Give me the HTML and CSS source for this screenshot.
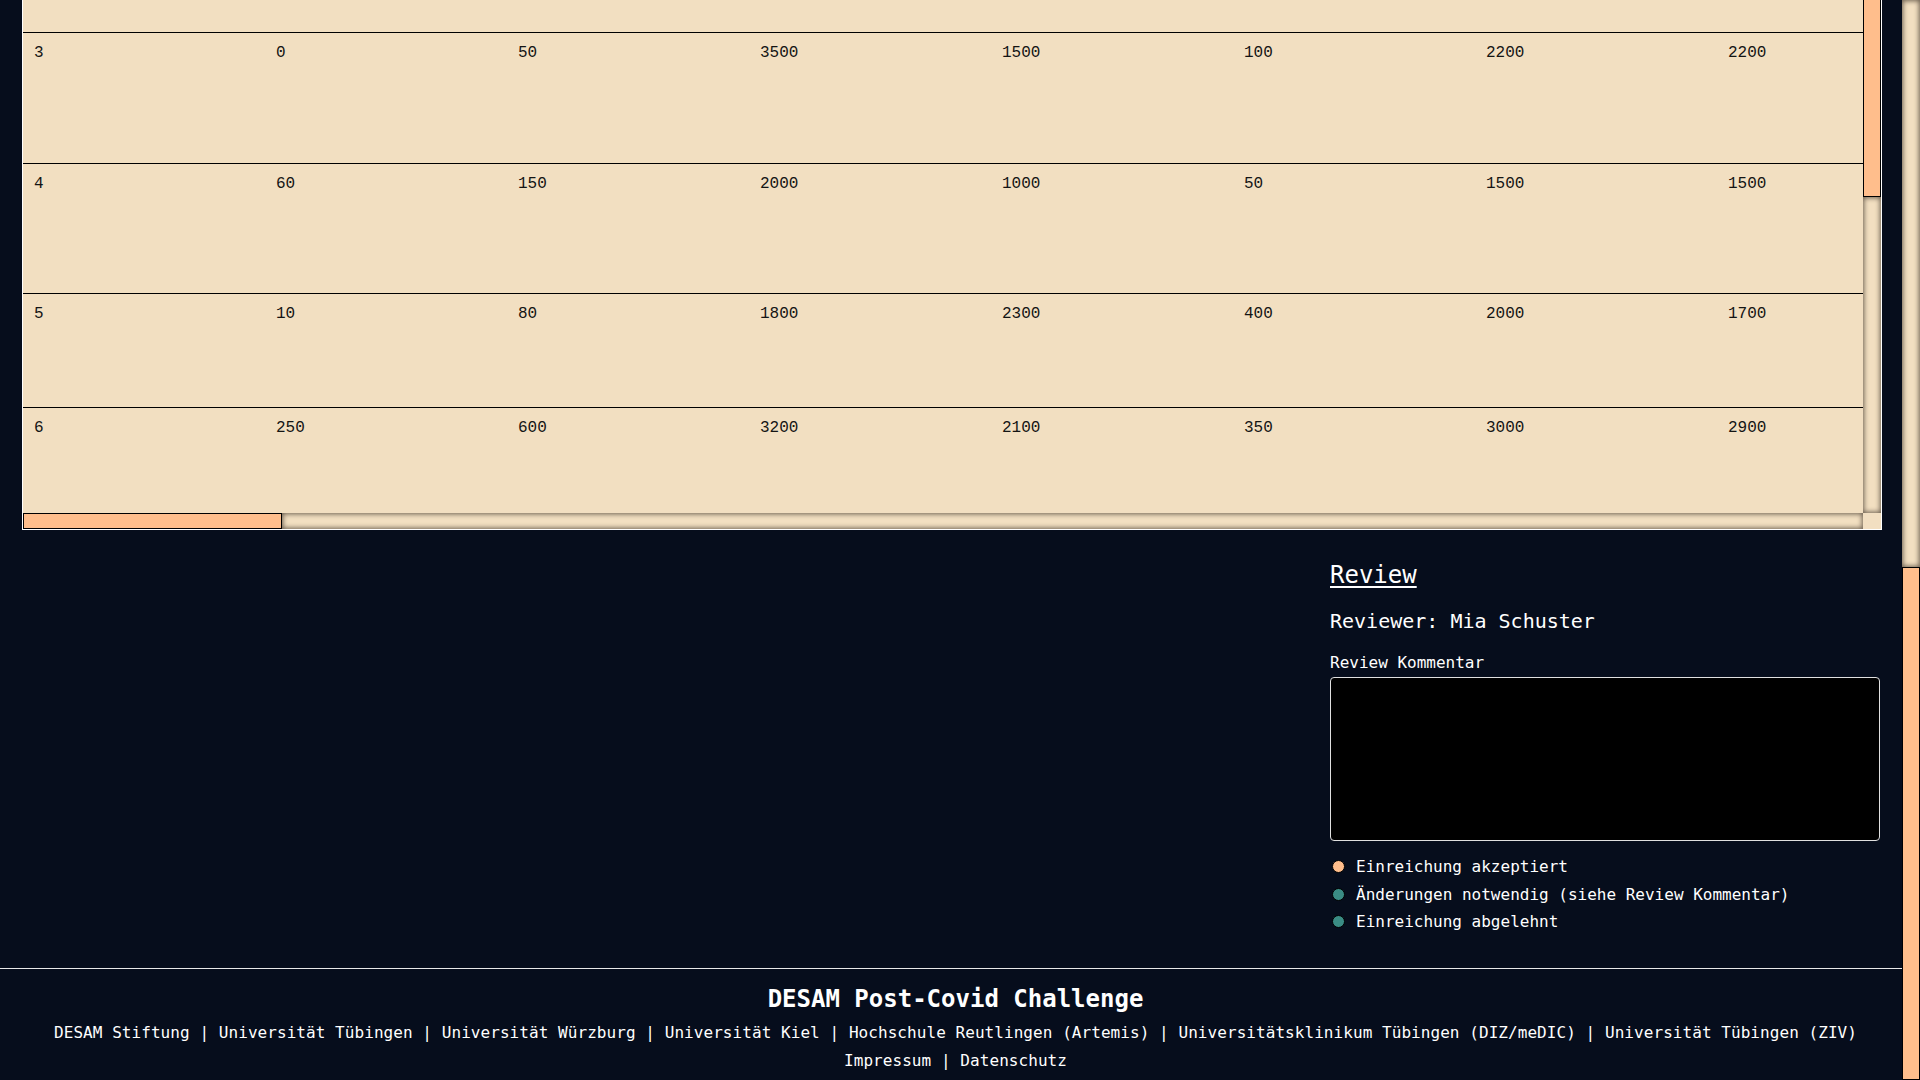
FILE: index.html
```html
<!DOCTYPE html>
<html lang="de">
<head>
<meta charset="utf-8">
<title>Einreichung – DESAM Post-Covid Challenge</title>
<link rel="stylesheet" href="styles.css">
</head>
<body>
<div class="page">
  <main class="main">
    <div class="table-panel">
      <div class="table-view">
        <table class="data-table">
          <tbody>
            <tr class="row-131"><td>3</td><td>0</td><td>50</td><td>3500</td><td>1500</td><td>100</td><td>2200</td><td>2200</td></tr>
            <tr class="row-130"><td>4</td><td>60</td><td>150</td><td>2000</td><td>1000</td><td>50</td><td>1500</td><td>1500</td></tr>
            <tr class="row-114"><td>5</td><td>10</td><td>80</td><td>1800</td><td>2300</td><td>400</td><td>2000</td><td>1700</td></tr>
            <tr class="row-120"><td>6</td><td>250</td><td>600</td><td>3200</td><td>2100</td><td>350</td><td>3000</td><td>2900</td></tr>
          </tbody>
        </table>
      </div>
      <div class="vbar">
        <div class="vbar-thumb"></div>
        <div class="bar-track"></div>
      </div>
      <div class="hbar">
        <div class="hbar-thumb"></div>
        <div class="bar-track"></div>
      </div>
      <div class="bar-corner"></div>
    </div>

    <div class="review-row">
      <section class="review">
        <h2 class="review-title">Review</h2>
        <p class="reviewer">Reviewer: Mia Schuster</p>
        <label class="comment-label" for="comment">Review Kommentar</label>
        <textarea id="comment" class="comment"></textarea>
        <div class="options">
          <label class="option"><input class="option-radio" type="radio" name="status" checked>Einreichung akzeptiert</label>
          <label class="option"><input class="option-radio" type="radio" name="status">Änderungen notwendig (siehe Review Kommentar)</label>
          <label class="option"><input class="option-radio" type="radio" name="status">Einreichung abgelehnt</label>
        </div>
      </section>
    </div>
  </main>

  <footer class="site-footer">
    <p class="footer-title">DESAM Post-Covid Challenge</p>
    <p class="footer-line"><a href="#">DESAM Stiftung</a> | <a href="#">Universität Tübingen</a> | <a href="#">Universität Würzburg</a> | <a href="#">Universität Kiel</a> | <a href="#">Hochschule Reutlingen (Artemis)</a> | <a href="#">Universitätsklinikum Tübingen (DIZ/meDIC)</a> | <a href="#">Universität Tübingen (ZIV)</a></p>
    <p class="footer-line"><a href="#">Impressum</a> | <a href="#">Datenschutz</a></p>
  </footer>
</div>

<div class="page-scrollbar">
  <div class="bar-track"></div>
  <div class="page-thumb"></div>
</div>
</body>
</html>
```

FILE: styles.css
```css
html,
body {
  height: 100%;
}

body {
  margin: 0;
  display: flex;
  overflow: hidden;
  background: #060d1c;
  color: #ffffff;
  font-family: "DejaVu Sans Mono", monospace;
  font-size: 16px;
}

.page {
  flex: 1;
  min-width: 0;
  display: flex;
  flex-direction: column;
}

/* fake scrollbars (drawn, as the capture hides native ones) */
.bar-track {
  flex: 1;
  background: #f2dfc1;
  box-shadow: inset 0 0 5px 1px #6a5e4e;
}

.page-scrollbar {
  width: 18px;
  flex: none;
  display: flex;
  flex-direction: column;
}

.page-thumb {
  height: 513px;
  box-sizing: border-box;
  background: #ffbe8c;
  border: 1px solid #000000;
}

/* main content */
.main {
  padding: 0 20px 0 22px;
}

.table-panel {
  display: grid;
  grid-template-columns: 1840px 18px;
  grid-template-rows: 513px 16px;
  border: 1px solid #ffffff;
  border-top: 0;
  background: #f2dfc1;
}

.table-view {
  overflow: hidden;
  padding-top: 32px;
  box-sizing: border-box;
}

.vbar {
  display: flex;
  flex-direction: column;
}

.vbar-thumb {
  height: 197px;
  box-sizing: border-box;
  background: #ffbe8c;
  border: 1px solid #000000;
  border-top: 0;
}

.hbar {
  display: flex;
}

.hbar-thumb {
  width: 259px;
  box-sizing: border-box;
  background: #ffbe8c;
  border: 1px solid #000000;
}

.bar-corner {
  background: #f2dfc1;
}

.data-table {
  border-collapse: separate;
  border-spacing: 0;
  border-top: 1px solid #000000;
  font-family: "Liberation Mono", monospace;
  font-size: 16px;
  color: #141414;
}

.data-table td {
  width: 242px;
  min-width: 242px;
  box-sizing: border-box;
  padding: 11px;
  text-align: left;
  vertical-align: top;
  border-bottom: 1px solid #000000;
  line-height: normal;
}

.row-114 { height: 114px; }
.row-120 { height: 120px; }
.row-130 { height: 130px; }
.row-131 { height: 131px; }

/* review */
.review-row {
  display: flex;
  justify-content: flex-end;
}

.review {
  width: 552px;
  padding-bottom: 37px;
}

.review-title {
  margin: 31px 0 0;
  font-size: 24px;
  line-height: 28px;
  font-weight: normal;
  text-decoration: underline;
  text-decoration-thickness: 2px;
  text-underline-offset: 3px;
}

.reviewer {
  margin: 20px 0 0;
  font-size: 20px;
  line-height: 24px;
}

.comment-label {
  display: block;
  margin-top: 20px;
  font-size: 16px;
  line-height: 19px;
}

.comment {
  display: block;
  margin: 5px 0 0;
  width: 550px;
  height: 164px;
  box-sizing: border-box;
  background: #000000;
  color: #ffffff;
  border: 1px solid #e0e0e0;
  border-radius: 4px;
  resize: none;
  font-family: "DejaVu Sans Mono", monospace;
  font-size: 16px;
}

.options {
  display: flex;
  flex-direction: column;
  gap: 8.5px;
  margin-top: 16px;
}

.option {
  display: flex;
  align-items: center;
  height: 19px;
  line-height: 19px;
  font-size: 16px;
}

.option-radio {
  appearance: none;
  -webkit-appearance: none;
  width: 13px;
  height: 13px;
  margin: 0 11px 0 2px;
  border: 1.5px solid #000000;
  border-radius: 50%;
  background: #3a8c84;
  box-sizing: border-box;
  flex: none;
}

.option-radio:checked {
  background: #ffbe8c;
}

/* footer */
.site-footer {
  border-top: 1px solid #e8e8e8;
  padding: 16px 0 5px 9px;
  text-align: center;
}

.footer-title {
  margin: 0 0 6px;
  font-size: 24px;
  line-height: 28px;
  font-weight: bold;
}

.footer-line {
  margin: 0;
  font-size: 16px;
  line-height: 28px;
  letter-spacing: 0.06px;
  white-space: nowrap;
}

.footer-line a {
  color: #ffffff;
  text-decoration: none;
}
```
